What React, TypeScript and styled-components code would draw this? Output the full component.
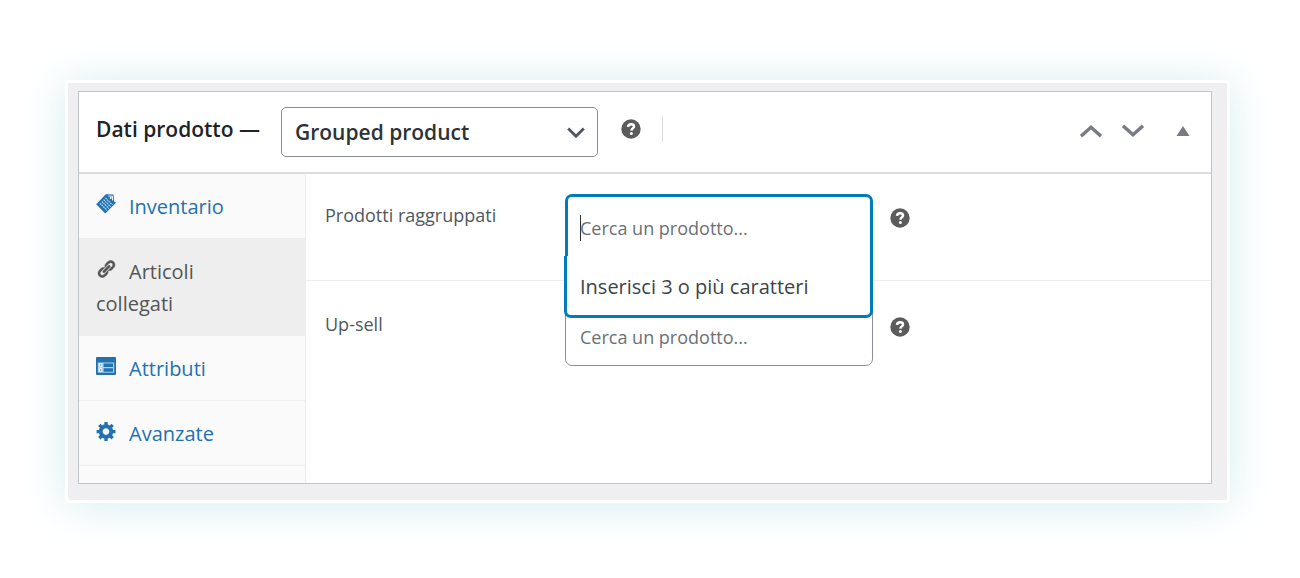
import React from "react";
import styled, { createGlobalStyle } from "styled-components";

const GlobalStyle = createGlobalStyle`
  *, *::before, *::after { box-sizing: border-box; }
  body {
    margin: 0;
    background: #fff;
    color: #1d2327;
    font-family: "Open Sans", "Noto Sans", sans-serif;
    font-size: 18px;
  }
  button, input, select { font: inherit; color: inherit; margin: 0; }
`;

const Page = styled.main`
  padding: 80px 70px 75px 65px;
`;

const Frame = styled.div`
  padding: 8px 15px 16px 10px;
  background: #efeff1;
  border: 3px solid #fff;
  border-radius: 4px;
  box-shadow: 0 2px 44px #d3ecf2;
`;

const Postbox = styled.section`
  background: #fff;
  border: 1px solid #c3c4c7;
`;

const Header = styled.header`
  display: flex;
  align-items: center;
  height: 82px;
  padding: 0 16px 0 17px;
  border-bottom: 2px solid #dcdcde;
`;

const Title = styled.label`
  width: 185px;
  padding-bottom: 6px;
  font-size: 21px;
  line-height: 28px;
  font-weight: 600;
  white-space: nowrap;
`;

const TypePicker = styled.div`
  position: relative;
  width: 317px;
`;

const TypeSelect = styled.select`
  display: block;
  width: 100%;
  height: 50px;
  padding: 0 40px 0 13px;
  appearance: none;
  background: #fff;
  border: 1px solid #8c8f94;
  border-radius: 5px;
  color: #2c3338;
  font-size: 21px;
  font-weight: 600;
`;

const PickerArrow = styled.svg`
  position: absolute;
  right: 13px;
  top: 19px;
  pointer-events: none;
`;

const HeaderExtra = styled.div`
  display: flex;
  align-items: center;
  gap: 21px;
  padding: 0 0 7px 23px;
`;

const HelpButton = styled.button`
  display: flex;
  padding: 0;
  background: none;
  border: 0;
  color: #5c5c5c;
`;

const Divider = styled.span`
  width: 1px;
  height: 26px;
  background: #dcdcde;
`;

const Handles = styled.div`
  display: flex;
  align-items: center;
  gap: 18px;
  margin-left: auto;
  padding-bottom: 2px;
`;

const HandleButton = styled.button`
  display: flex;
  justify-content: center;
  width: 24px;
  padding: 0;
  background: none;
  border: 0;
  color: #787c82;
`;

const ToggleButton = styled(HandleButton)`
  margin-left: 8px;
`;

const Body = styled.div`
  display: flex;
  min-height: 309px;
`;

const Tabs = styled.nav`
  flex: none;
  width: 227px;
  background: #fafafa;
  border-right: 1px solid #eee;
`;

const Tab = styled.a<{ $active?: boolean }>`
  display: block;
  padding: 17px 34px 15px 17px;
  border-bottom: 1px solid #eee;
  background: ${(p) => (p.$active ? "#eee" : "transparent")};
  color: ${(p) => (p.$active ? "#555" : "#2271b1")};
  font-size: 20px;
  line-height: 32px;
  text-decoration: none;
`;

const TabIcon = styled.svg`
  margin-right: 13px;
  fill: currentColor;
`;

const Panel = styled.div`
  flex: 1;
  min-width: 0;
`;

const FieldRow = styled.div`
  display: flex;
  align-items: flex-start;
  padding: 20px 19px 24px;
  & + & {
    padding-top: 22px;
    border-top: 1px solid #eee;
  }
`;

const FieldLabel = styled.label`
  flex: none;
  width: 240px;
  padding-top: 9px;
  color: #50575e;
  line-height: 24px;
`;

const SearchBox = styled.div<{ $open?: boolean }>`
  position: relative;
  display: flex;
  align-items: center;
  width: 308px;
  margin-right: 17px;
  background: #fff;
  border: ${(p) => (p.$open ? "3px solid #007cba" : "1px solid #8c8f94")};
  border-bottom-width: ${(p) => (p.$open ? 0 : "1px")};
  border-radius: ${(p) => (p.$open ? "7px 7px 0 0" : "7px")};
  padding: ${(p) => (p.$open ? "6px 12px 3px" : "8px 14px 3px")};
`;

const Caret = styled.span`
  width: 1px;
  height: 26px;
  margin-right: -1px;
  background: #2c3338;
`;

const SearchInput = styled.input`
  flex: 1;
  min-width: 0;
  height: 50px;
  padding: 0;
  background: none;
  border: 0;
  outline: 0;
  &::placeholder { color: #6c7075; opacity: 1; }
`;

const Results = styled.div`
  position: absolute;
  z-index: 1;
  top: 100%;
  left: -4px;
  right: -3px;
  height: 62px;
  padding: 14px 13px;
  background: #fff;
  border: 3px solid #007cba;
  border-top: 0;
  border-radius: 0 0 7px 7px;
  color: #3c434a;
  font-size: 20px;
  line-height: 34px;
  white-space: nowrap;
`;

const HelpSlot = styled.div`
  padding-top: 14px;
`;

const Help = () => (
  <HelpButton type="button" aria-label="Aiuto">
    <svg width="20" height="20" viewBox="0 0 20 20" aria-hidden="true">
      <circle cx="10" cy="10" r="9.7" fill="currentColor" />
      <path d="M7 7.9C7.1 6.1 8.3 5.2 10.1 5.2c1.8 0 2.9.8 2.9 2.2 0 2-2.5 2-2.6 4.2" fill="none" stroke="#fff" strokeWidth="2.5" />
      <circle cx="10.4" cy="14.5" r="1.5" fill="#fff" />
    </svg>
  </HelpButton>
);

const TicketsIcon = () => (
  <TabIcon width="20" height="21" viewBox="0 0 20 21" aria-hidden="true">
    <path d="M9.8 1.3 17.6 1.6 18.2 8.4 20 9.8 9.3 20.4.2 11.2z" />
    <path d="M12.4 3 16.4 3.2 16.6 7.4" fill="none" stroke="#fafafa" strokeWidth="1.1" />
    <circle cx="14.6" cy="5.1" r="1" fill="#fafafa" />
    <path d="m9.4 4.9 7 7M7.6 6.7l7 7M5.8 8.5l7 7M4 10.3l7 7" fill="none" stroke="#c9dff1" strokeWidth="1.1" strokeDasharray="1.7 .6" />
  </TabIcon>
);

const LinkIcon = () => (
  <TabIcon width="20" height="20" viewBox="0 0 20 20" aria-hidden="true">
    <path stroke="currentColor" strokeWidth=".5" d="M17.74 2.76c1.68 1.69 1.68 4.41 0 6.1l-1.53 1.52c-1.12 1.12-2.7 1.47-4.14 1.09l2.62-2.61.76-.77.76-.76c.84-.84.84-2.2 0-3.04-.84-.85-2.2-.85-3.04 0l-.77.76-3.38 3.38c-.37-1.44-.02-3.02 1.1-4.14l1.52-1.53c1.69-1.68 4.42-1.68 6.1 0zM8.59 13.43l5.34-5.34c.42-.42.42-1.1 0-1.52-.44-.43-1.13-.39-1.53 0l-5.33 5.34c-.42.42-.42 1.1 0 1.52.44.43 1.13.39 1.52 0zm-.76 2.29l4.14-4.15c.38 1.44.03 3.02-1.09 4.14l-1.52 1.53c-1.69 1.68-4.41 1.68-6.1 0-1.68-1.68-1.68-4.42 0-6.1l1.53-1.52c1.12-1.12 2.7-1.47 4.14-1.1l-4.14 4.15c-.85.84-.85 2.2 0 3.05.84.84 2.2.84 3.04 0z" />
  </TabIcon>
);

const AttributesIcon = () => (
  <TabIcon width="20" height="20" viewBox="0 0 20 20" aria-hidden="true">
    <rect y="1" width="20" height="18" rx="1" />
    <path d="M1.8 6.5h16.4v10.2H1.8z" fill="#b5d2ea" />
    <path d="M7.6 7.5h9.4v3.4H7.6zM7.6 12.3h9.4v3.4H7.6z" />
    <path d="M3 7.6h3v2.8H3zM3 12.6h3v2.8H3z" fill="#fff" />
    <path d="M3.8 8.6h1.6v1H3.8zM3.8 13.6h1.6v1H3.8z" />
  </TabIcon>
);

const GearIcon = () => (
  <TabIcon width="20" height="20" viewBox="0.5 1 18 18" aria-hidden="true">
    <path d="M18 12h-2.18c-.17.7-.44 1.35-.81 1.93l1.54 1.54-2.1 2.1-1.54-1.54c-.58.36-1.23.63-1.91.79V19H8v-2.18c-.68-.16-1.33-.43-1.91-.79l-1.54 1.54-2.12-2.12 1.54-1.54c-.36-.58-.63-1.23-.79-1.91H1V9.03h2.17c.16-.7.44-1.35.8-1.94L2.43 5.55l2.1-2.1 1.54 1.54c.58-.37 1.24-.64 1.93-.81V2h3v2.18c.68.16 1.33.43 1.91.79l1.54-1.54 2.12 2.12-1.54 1.54c.36.59.64 1.24.8 1.94H18V12zm-8.5 1.5c1.66 0 3-1.34 3-3s-1.34-3-3-3-3 1.34-3 3 1.34 3 3 3z" />
  </TabIcon>
);

const tabs = [
  { label: "Inventario", Icon: TicketsIcon },
  { label: "Articoli collegati", Icon: LinkIcon, active: true },
  { label: "Attributi", Icon: AttributesIcon },
  { label: "Avanzate", Icon: GearIcon },
];

export default function App() {
  return (
    <>
      <GlobalStyle />
      <Page>
        <Frame>
          <Postbox>
            <Header>
              <Title htmlFor="product-type">Dati prodotto —</Title>
              <TypePicker>
                <TypeSelect id="product-type">
                  <option>Grouped product</option>
                </TypeSelect>
                <PickerArrow width="18" height="14" viewBox="0 0 18 14" aria-hidden="true">
                  <path d="M1.2 2.5 9 10.3l7.8-7.8" fill="none" stroke="#50575e" strokeWidth="2.8" />
                </PickerArrow>
              </TypePicker>
              <HeaderExtra>
                <Help />
                <Divider />
              </HeaderExtra>
              <Handles>
                <HandleButton type="button" aria-label="Sposta su">
                  <svg width="22" height="14" viewBox="0 0 22 14" aria-hidden="true">
                    <path d="M1 12.2 11 3.2l10 9" fill="none" stroke="currentColor" strokeWidth="3.4" />
                  </svg>
                </HandleButton>
                <HandleButton type="button" aria-label="Sposta giù">
                  <svg width="22" height="14" viewBox="0 0 22 14" aria-hidden="true">
                    <path d="M1 1.8l10 9 10-9" fill="none" stroke="currentColor" strokeWidth="3.4" />
                  </svg>
                </HandleButton>
                <ToggleButton type="button" aria-label="Chiudi pannello">
                  <svg width="14" height="10" viewBox="0 0 14 10" aria-hidden="true">
                    <path d="M7 0l6.5 10H.5z" fill="currentColor" />
                  </svg>
                </ToggleButton>
              </Handles>
            </Header>
            <Body>
              <Tabs>
                {tabs.map(({ label, Icon, active }) => (
                  <Tab key={label} href="#" $active={active}>
                    <Icon />
                    {label}
                  </Tab>
                ))}
              </Tabs>
              <Panel>
                <FieldRow>
                  <FieldLabel htmlFor="grouped">Prodotti raggruppati</FieldLabel>
                  <SearchBox $open>
                    <Caret />
                    <SearchInput id="grouped" placeholder="Cerca un prodotto..." />
                    <Results role="status">Inserisci 3 o più caratteri</Results>
                  </SearchBox>
                  <HelpSlot>
                    <Help />
                  </HelpSlot>
                </FieldRow>
                <FieldRow>
                  <FieldLabel htmlFor="upsell">Up-sell</FieldLabel>
                  <SearchBox>
                    <SearchInput id="upsell" placeholder="Cerca un prodotto..." />
                  </SearchBox>
                  <HelpSlot>
                    <Help />
                  </HelpSlot>
                </FieldRow>
              </Panel>
            </Body>
          </Postbox>
        </Frame>
      </Page>
    </>
  );
}
